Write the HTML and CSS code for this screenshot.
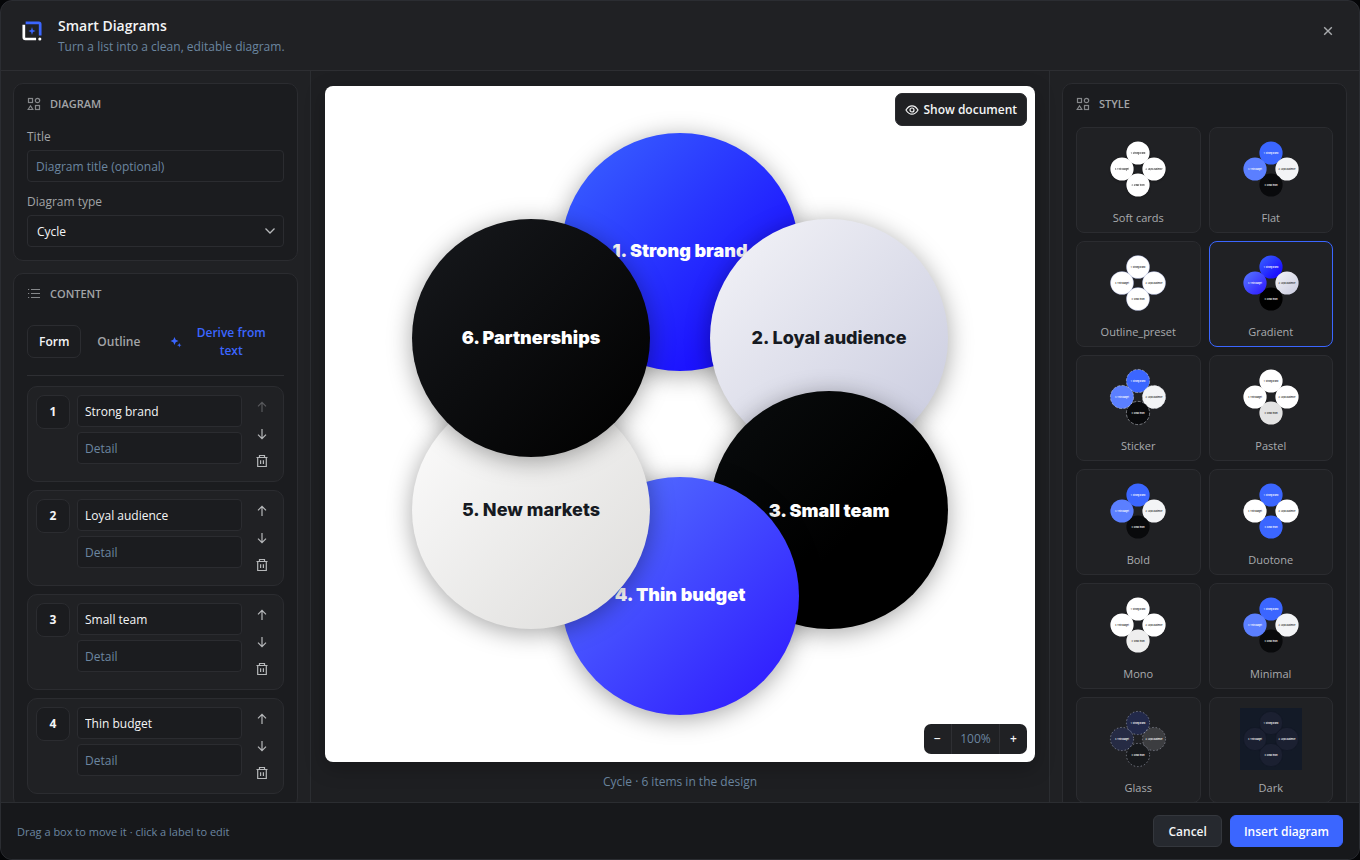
FILE: index.html
```
<!DOCTYPE html>
<html lang="en">

<head>
    <meta charset="UTF-8">
    <title>Smart Diagrams</title>
    <link rel="stylesheet" href="styles.css">
</head>

<body>
    <!-- shared icons -->
    <svg class="defs" aria-hidden="true">
        <symbol id="i-shapes" viewBox="0 0 14 14">
            <g fill="none" stroke="currentColor" stroke-width="1.2">
                <rect x="1.5" y="1.5" width="4" height="4"/>
                <circle cx="10.5" cy="3.5" r="2.2"/>
                <path d="M3.5 8.8L5.8 12.5H1.2Z"/>
                <rect x="8.5" y="8.5" width="4" height="4"/>
            </g>
        </symbol>
        <symbol id="i-list" viewBox="0 0 14 14">
            <path d="M4 2.5h9M4 6.500h9M4 10.500h9M1 2.500h1.2M1 6.500h1.2M1 10.500h1.2" stroke="currentColor" fill="none"/>
        </symbol>
        <symbol id="i-up" viewBox="0 0 14 14">
            <path d="M7 12V2.5M3 6.3L7 2.3L11 6.3" stroke="currentColor" stroke-width="1.2" fill="none"/>
        </symbol>
        <symbol id="i-down" viewBox="0 0 14 14">
            <path d="M7 2V11.5M3 7.7L7 11.7L11 7.7" stroke="currentColor" stroke-width="1.2" fill="none"/>
        </symbol>
        <symbol id="i-trash" viewBox="0 0 14 14">
            <path d="M1.5 3.5h11M4.5 3.5v-2h5v2M2.7 3.5v9h8.6v-9M5.6 6.2v3.8M8.4 6.2v3.8" stroke="currentColor" stroke-width="1.2" fill="none"/>
        </symbol>
        <defs>
            <linearGradient id="g1" x1="0" y1="0" x2="1" y2="1"><stop offset="0" stop-color="#3b66ff"/><stop offset=".75" stop-color="#1c14ff"/><stop offset="1" stop-color="#1408ff"/></linearGradient>
            <linearGradient id="g2" x1="0" y1="0" x2="1" y2="1"><stop offset="0" stop-color="#f4f4f8"/><stop offset="1" stop-color="#c8cade"/></linearGradient>
            <linearGradient id="g3" x1="0" y1="0" x2="1" y2="1"><stop offset="0" stop-color="#0a0d0e"/><stop offset=".6" stop-color="#000"/></linearGradient>
            <linearGradient id="g4" x1="0" y1="0" x2="1" y2="1"><stop offset="0" stop-color="#5779ff"/><stop offset="1" stop-color="#2c14ff"/></linearGradient>
            <linearGradient id="g5" x1="0" y1="0" x2="1" y2="1"><stop offset="0" stop-color="#fdfdfd"/><stop offset="1" stop-color="#dddcda"/></linearGradient>
            <linearGradient id="g6" x1="0" y1="0" x2="1" y2="1"><stop offset="0" stop-color="#17191d"/><stop offset=".9" stop-color="#020202"/></linearGradient>
        </defs>
    </svg>

    <div class="dialog">
        <header class="header">
            <svg class="logo" viewBox="0 0 22 22" aria-hidden="true">
                <path d="M4 2H18.5Q20 2 20 3.5V16" fill="none" stroke="#3b66ff" stroke-width="3"/>
                <path d="M2 4V18Q2 19.8 3.8 19.8H15.5" fill="none" stroke="#fff" stroke-width="3"/>
                <circle cx="19.6" cy="19.8" r="1.7" fill="#fff"/>
                <path d="M11 6.5L12 10L15 11L12 12L11 15.5L10 12L7 11L10 10Z" fill="#3b66ff"/>
            </svg>
            <div class="heading">
                <h1>Smart Diagrams</h1>
                <p>Turn a list into a clean, editable diagram.</p>
            </div>
            <button class="close" aria-label="Close">
                <svg viewBox="0 0 10 10"><path d="M1.2 1.2L8.8 8.8M8.8 1.2L1.2 8.8" stroke="currentColor" stroke-width="1.4"/></svg>
            </button>
        </header>

        <main class="main">
            <aside class="side left">
                <section class="card">
                    <h2><svg><use href="#i-shapes"/></svg>Diagram</h2>
                    <label for="title">Title</label>
                    <input class="field title-field" id="title" type="text" placeholder="Diagram title (optional)">
                    <label for="type">Diagram type</label>
                    <div class="select">
                        <select class="field" id="type">
                            <option>Cycle</option>
                        </select>
                        <svg viewBox="0 0 12 12"><path d="M1.5 3.5L6 8L10.5 3.5" fill="none" stroke="currentColor" stroke-width="1.3"/></svg>
                    </div>
                </section>

                <section class="card content">
                    <h2><svg><use href="#i-list"/></svg>Content</h2>
                    <div class="tabs">
                        <button class="tab active">Form</button>
                        <button class="tab">Outline</button>
                        <button class="derive">
                            <svg viewBox="0 0 12 12"><path d="M4.5 1L5.7 3.8L8.5 5L5.7 6.2L4.5 9L3.3 6.2L.5 5L3.3 3.8ZM9.3 7L9.9 8.6L11.5 9.2L9.9 9.8L9.3 11.4L8.7 9.8L7.1 9.2L8.7 8.6Z" fill="currentColor"/></svg>
                            <span>Derive from text</span>
                        </button>
                    </div>
                    <ul class="items">
                        <li class="item">
                            <b>1</b>
                            <div class="fields">
                                <input class="field" type="text" value="Strong brand" aria-label="Item 1">
                                <input class="field" type="text" placeholder="Detail" aria-label="Item 1 detail">
                            </div>
                            <div class="tools">
                                <button disabled aria-label="Move up"><svg><use href="#i-up"/></svg></button>
                                <button aria-label="Move down"><svg><use href="#i-down"/></svg></button>
                                <button aria-label="Delete"><svg><use href="#i-trash"/></svg></button>
                            </div>
                        </li>
                        <li class="item">
                            <b>2</b>
                            <div class="fields">
                                <input class="field" type="text" value="Loyal audience" aria-label="Item 2">
                                <input class="field" type="text" placeholder="Detail" aria-label="Item 2 detail">
                            </div>
                            <div class="tools">
                                <button aria-label="Move up"><svg><use href="#i-up"/></svg></button>
                                <button aria-label="Move down"><svg><use href="#i-down"/></svg></button>
                                <button aria-label="Delete"><svg><use href="#i-trash"/></svg></button>
                            </div>
                        </li>
                        <li class="item">
                            <b>3</b>
                            <div class="fields">
                                <input class="field" type="text" value="Small team" aria-label="Item 3">
                                <input class="field" type="text" placeholder="Detail" aria-label="Item 3 detail">
                            </div>
                            <div class="tools">
                                <button aria-label="Move up"><svg><use href="#i-up"/></svg></button>
                                <button aria-label="Move down"><svg><use href="#i-down"/></svg></button>
                                <button aria-label="Delete"><svg><use href="#i-trash"/></svg></button>
                            </div>
                        </li>
                        <li class="item">
                            <b>4</b>
                            <div class="fields">
                                <input class="field" type="text" value="Thin budget" aria-label="Item 4">
                                <input class="field" type="text" placeholder="Detail" aria-label="Item 4 detail">
                            </div>
                            <div class="tools">
                                <button aria-label="Move up"><svg><use href="#i-up"/></svg></button>
                                <button aria-label="Move down"><svg><use href="#i-down"/></svg></button>
                                <button aria-label="Delete"><svg><use href="#i-trash"/></svg></button>
                            </div>
                        </li>
                    </ul>
                </section>
            </aside>

            <section class="stage">
                <div class="canvas">
                    <svg class="diagram" viewBox="0 0 710 676">
                        <g class="node"><circle cx="355" cy="166" r="119" fill="url(#g1)"/><text x="355" y="171">1. Strong brand</text></g>
                        <g class="node dark"><circle cx="504" cy="252" r="119" fill="url(#g2)"/><text x="504" y="258">2. Loyal audience</text></g>
                        <g class="node"><circle cx="504" cy="424" r="119" fill="url(#g3)"/><text x="504" y="431">3. Small team</text></g>
                        <g class="node"><circle cx="355" cy="510" r="119" fill="url(#g4)"/><text x="355" y="515">4. Thin budget</text></g>
                        <g class="node dark"><circle cx="206" cy="424" r="119" fill="url(#g5)"/><text x="206" y="430">5. New markets</text></g>
                        <g class="node"><circle cx="206" cy="252" r="119" fill="url(#g6)"/><text x="206" y="258">6. Partnerships</text></g>
                    </svg>
                    <button class="show">
                        <svg viewBox="0 0 14 14"><path d="M1 7Q3.5 2.8 7 2.8T13 7Q10.5 11.2 7 11.2T1 7Z" fill="none" stroke="currentColor" stroke-width="1.2"/><circle cx="7" cy="7" r="2" fill="none" stroke="currentColor" stroke-width="1.2"/></svg>
                        Show document
                    </button>
                    <div class="zoom">
                        <button aria-label="Zoom out">−</button>
                        <span>100%</span>
                        <button aria-label="Zoom in">+</button>
                    </div>
                </div>
                <p class="caption">Cycle · 6 items in the design</p>
            </section>

            <aside class="side right">
                <section class="card style-card">
                    <h2><svg><use href="#i-shapes"/></svg>Style</h2>
                    <div class="styles">
                        <button class="style soft">
                            <svg viewBox="0 0 62 62">
                                <g id="thumb">
                                    <g class="t1"><circle cx="31" cy="15" r="11.6"/><text x="31" y="16">1. Strong brand</text></g>
                                    <g class="t2"><circle cx="47" cy="31" r="11.6"/><text x="47" y="32">2. Loyal audience</text></g>
                                    <g class="t3"><circle cx="31" cy="47" r="11.6"/><text x="31" y="48">3. Small team</text></g>
                                    <g class="t4"><circle cx="15" cy="31" r="11.6"/><text x="15" y="32">4. Thin budget</text></g>
                                </g>
                            </svg>
                            Soft cards
                        </button>
                        <button class="style flat"><svg><use href="#thumb"/></svg>Flat</button>
                        <button class="style outline"><svg><use href="#thumb"/></svg>Outline_preset</button>
                        <button class="style gradient selected"><svg><use href="#thumb"/></svg>Gradient</button>
                        <button class="style flat sticker"><svg><use href="#thumb"/></svg>Sticker</button>
                        <button class="style pastel"><svg><use href="#thumb"/></svg>Pastel</button>
                        <button class="style flat"><svg><use href="#thumb"/></svg>Bold</button>
                        <button class="style duotone"><svg><use href="#thumb"/></svg>Duotone</button>
                        <button class="style mono"><svg><use href="#thumb"/></svg>Mono</button>
                        <button class="style flat"><svg><use href="#thumb"/></svg>Minimal</button>
                        <button class="style glass"><svg><use href="#thumb"/></svg>Glass</button>
                        <button class="style night"><svg><use href="#thumb"/></svg>Dark</button>
                    </div>
                </section>
            </aside>
        </main>

        <footer class="footer">
            <p>Drag a box to move it · click a label to edit</p>
            <button class="btn">Cancel</button>
            <button class="btn primary">Insert diagram</button>
        </footer>
    </div>
</body>

</html>
```
FILE: styles.css
```
* {
    box-sizing: border-box;
}

body {
    margin: 0;
    background: #050608;
    color: #f4f5f6;
    font-family: "Open Sans", "Noto Sans", sans-serif;
    font-size: 12px;
}

h1, h2, p, ul {
    margin: 0;
    padding: 0;
}

button, input, select {
    font: inherit;
    color: inherit;
}

button {
    padding: 0;
    border: 0;
    background: none;
    cursor: pointer;
}

.defs {
    position: absolute;
    width: 0;
    height: 0;
}

.dialog {
    display: flex;
    flex-direction: column;
    height: 100vh;
    background: #202124;
    border: 1px solid #2b2d32;
    border-radius: 12px;
    overflow: hidden;
}

/* header */
.header {
    display: flex;
    align-items: flex-start;
    height: 70px;
    flex: none;
    padding: 15px 19px 15px 21px;
    border-bottom: 1px solid #2d2e32;
}

.logo {
    width: 20px;
    height: 20px;
    margin-top: 5px;
}

.heading {
    flex: 1;
    margin-left: 16px;
}

.heading h1 {
    font-size: 14px;
    line-height: 20px;
    font-weight: 600;
}

.heading p {
    line-height: 22px;
    color: #6b86a0;
}

.close {
    width: 24px;
    height: 24px;
    margin-top: 3px;
    color: #a9abae;
}

.close svg {
    width: 10px;
    height: 10px;
}

/* columns */
.main {
    display: flex;
    flex: 1;
    min-height: 0;
}

.side {
    width: 310px;
    flex: none;
    padding: 12px;
    overflow: auto;
    scrollbar-width: none;
}

.left {
    border-right: 1px solid #2b2d31;
}

.right {
    border-left: 1px solid #2b2d31;
}

.card {
    padding: 13px;
    margin-bottom: 12px;
    background: #1b1c1f;
    border: 1px solid #2b2c30;
    border-radius: 10px;
}

.card h2 {
    display: flex;
    align-items: center;
    gap: 9px;
    font-size: 11px;
    line-height: 14px;
    font-weight: 600;
    text-transform: uppercase;
    color: #a2a4a7;
}

.card h2 svg {
    width: 14px;
    height: 14px;
    color: #85878a;
}

label {
    display: block;
    margin: 17px 0 4px;
    line-height: 18px;
    color: #a2a4a7;
}

.field {
    display: block;
    width: 100%;
    height: 32px;
    padding: 0 8px;
    background: #1b1c1f;
    border: 1px solid #2b2c30;
    border-radius: 4px;
    outline: 0;
}

.field::placeholder {
    color: #6b86a0;
}

.title-field + label {
    margin-top: 11px;
}

.select {
    position: relative;
}

.select select {
    appearance: none;
    padding: 0 9px;
}

.select svg {
    position: absolute;
    top: 10px;
    right: 8px;
    width: 12px;
    height: 12px;
    color: #b6b8ba;
    pointer-events: none;
}

/* content list */
.tabs {
    display: flex;
    align-items: center;
    height: 60px;
    margin: 15px 0 10px;
    padding-bottom: 8px;
    border-bottom: 1px solid #2e2f33;
    gap: 4px;
}

.tab {
    height: 33px;
    padding: 0 11px;
    font-weight: 600;
    color: #a2a4a7;
    border: 1px solid transparent;
    border-radius: 7px;
}

.tab.active {
    color: #f4f5f6;
    border-color: #2b2c30;
}

.derive {
    display: flex;
    flex: 1;
    align-items: center;
    gap: 8px;
    padding: 0 12px 0 14px;
    line-height: 18px;
    font-weight: 600;
    color: #3b66ff;
}

.derive svg {
    width: 12px;
    height: 12px;
    flex: none;
}

.derive span {
    flex: 1;
}

.items {
    display: flex;
    flex-direction: column;
    gap: 8px;
    list-style: none;
}

.item {
    display: flex;
    gap: 7px;
    height: 96px;
    padding: 8px;
    background: #202124;
    border: 1px solid #2b2c30;
    border-radius: 10px;
}

.item b {
    width: 34px;
    height: 34px;
    line-height: 32px;
    text-align: center;
    font-weight: 700;
    background: #1b1c1f;
    border: 1px solid #2b2c30;
    border-radius: 8px;
}

.fields {
    display: grid;
    flex: 1;
    gap: 5px;
    align-content: start;
}

.fields .field {
    padding: 0 7px;
}

.tools {
    display: flex;
    flex-direction: column;
    justify-content: space-between;
    width: 26px;
    margin: -1px 0;
}

.tools button {
    height: 26px;
    color: #b6b8ba;
}

.tools button:disabled {
    color: #58595c;
}

.tools svg {
    display: block;
    width: 14px;
    height: 14px;
    margin: 0 auto;
}

/* canvas */
.stage {
    display: flex;
    flex: 1;
    flex-direction: column;
    min-width: 0;
    padding: 15px 14px 10px;
    background: #1e1f22;
}

.canvas {
    position: relative;
    flex: 1;
    min-height: 0;
    background: #fff;
    border-radius: 8px;
    box-shadow: 0 6px 20px rgba(0, 0, 0, .25);
}

.diagram {
    display: block;
    width: 100%;
    height: 100%;
}

.node circle {
    filter: drop-shadow(0 4px 12px rgba(0, 0, 0, .35));
}

.node text {
    font-family: Inter, sans-serif;
    font-size: 18px;
    font-weight: 900;
    text-anchor: middle;
    fill: #fff;
}

.node.dark text {
    font-weight: 800;
    fill: #161a22;
}

.show {
    position: absolute;
    top: 7px;
    right: 8px;
    display: flex;
    align-items: center;
    gap: 4px;
    height: 33px;
    padding: 0 9px;
    font-weight: 600;
    background: #202124;
    border: 1px solid #2b2c30;
    border-radius: 7px;
}

.show svg {
    width: 14px;
    height: 14px;
}

.zoom {
    position: absolute;
    right: 8px;
    bottom: 8px;
    display: flex;
    height: 30px;
    line-height: 30px;
    background: #202124;
    border-radius: 7px;
}

.zoom button {
    width: 27px;
    font-weight: 600;
}

.zoom span {
    width: 49px;
    text-align: center;
    color: #6b86a0;
    border: solid #2e2f33;
    border-width: 0 1px;
}

.caption {
    margin-top: 10px;
    line-height: 20px;
    text-align: center;
    color: #6b86a0;
}

/* style presets */
.styles {
    display: grid;
    grid-template-columns: 1fr 1fr;
    gap: 8px;
    margin-top: 16px;
}

.style {
    display: flex;
    flex-direction: column;
    align-items: center;
    gap: 10px;
    padding: 10px 0 6px;
    font-size: 11px;
    line-height: 16px;
    font-weight: 500;
    color: #a9abae;
    background: #202124;
    border: 1px solid #2b2c30;
    border-radius: 8px;
    --c1: #fff;
    --c2: #fff;
    --c3: #fff;
    --c4: #fff;
    --l1: #222;
    --l2: #222;
    --l3: #222;
    --l4: #222;
}

.style svg {
    width: 62px;
    height: 62px;
}

.style.selected {
    border-color: #3b66ff;
}

#thumb text {
    font-family: Inter, sans-serif;
    font-size: 2px;
    font-weight: 600;
    text-anchor: middle;
}

#thumb circle {
    stroke: var(--line, none);
    stroke-width: var(--line-width, 1);
    stroke-dasharray: var(--dash, none);
}

.t1 circle { fill: var(--c1); }
.t2 circle { fill: var(--c2); }
.t3 circle { fill: var(--c3); }
.t4 circle { fill: var(--c4); }
.t1 text { fill: var(--l1); }
.t2 text { fill: var(--l2); }
.t3 text { fill: var(--l3); }
.t4 text { fill: var(--l4); }

.soft svg {
    filter: drop-shadow(0 1px 1px rgba(0, 0, 0, .3));
}

.flat, .gradient {
    --c1: #3b66ff;
    --c2: #f3f4f6;
    --c3: #090a0c;
    --c4: #5b7fff;
    --l1: #fff;
    --l3: #fff;
    --l4: #fff;
}

.gradient {
    --c1: url(#g1);
    --c2: url(#g2);
    --c3: #000;
    --c4: url(#g4);
}

.outline {
    --line: #7f8fd0;
    --line-width: .3;
}

.sticker {
    --line: #d5d8e0;
    --line-width: .5;
    --dash: 3 1.5;
}

.pastel {
    --c3: #e3e3e3;
}

.duotone {
    --c1: #3b66ff;
    --c3: #3b66ff;
    --l1: #fff;
    --l3: #fff;
}

.mono {
    --c3: #eee;
}

.glass, .night {
    --l1: #fff;
    --l2: #fff;
    --l3: #fff;
    --l4: #fff;
}

.glass {
    --c1: rgba(37, 50, 105, .55);
    --c2: rgba(255, 255, 255, .13);
    --c3: rgba(10, 11, 13, .35);
    --c4: rgba(44, 54, 100, .5);
    --line: #a5a9ba;
    --line-width: .6;
    --dash: 1.5 2;
}

.night {
    --c1: #1b2031;
    --c2: #1b2031;
    --c3: #1b2031;
    --c4: #1b2031;
    --line: #101624;
    --line-width: .6;
}

.night svg {
    background: #131a27;
}

/* footer */
.footer {
    display: flex;
    align-items: center;
    flex: none;
    gap: 8px;
    height: 57px;
    padding: 0 16px;
    background: #17181b;
    border-top: 1px solid #2b2d31;
}

.footer p {
    flex: 1;
    font-size: 11px;
    color: #6b86a0;
}

.btn {
    height: 32px;
    padding: 0 14px;
    font-weight: 600;
    background: #26292f;
    border: 1px solid #34373d;
    border-radius: 6px;
}

.btn.primary {
    padding: 0 13px;
    background: #3b66ff;
    border-color: #3b66ff;
    color: #fff;
}
```
